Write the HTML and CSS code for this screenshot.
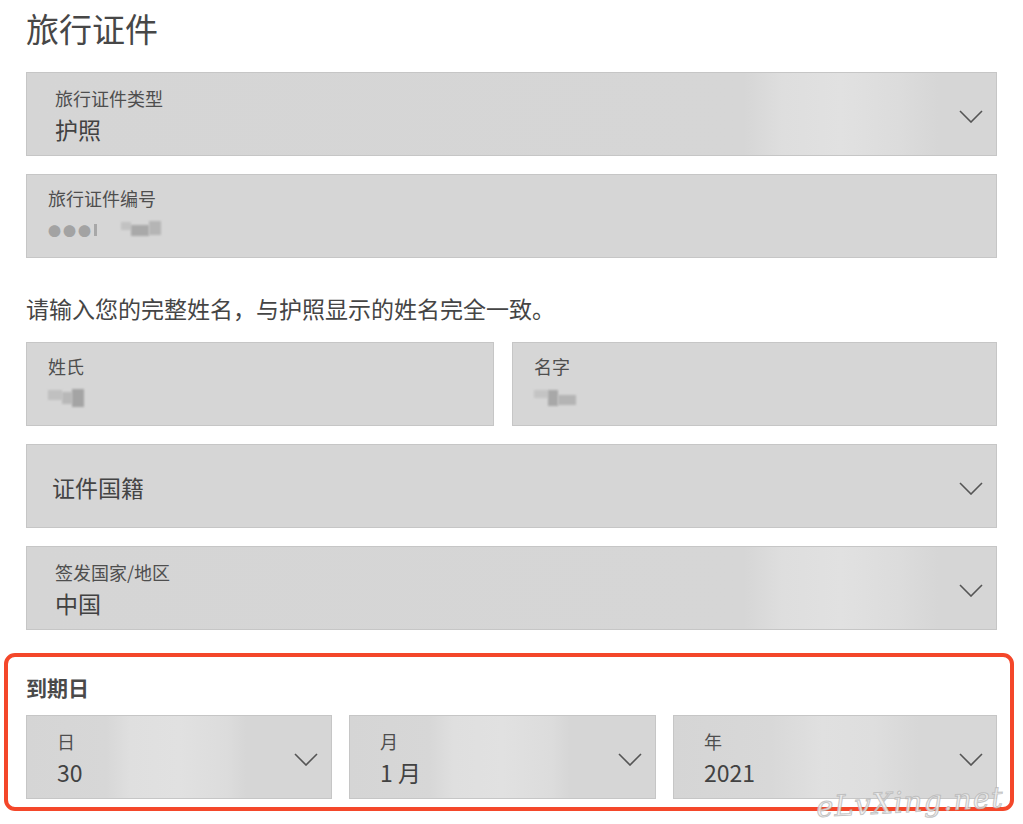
FILE: index.html
```html
<!DOCTYPE html>
<html lang="zh-CN">
<head>
    <meta charset="UTF-8">
    <meta name="viewport" content="width=device-width, initial-scale=1.0">
    <title>旅行证件</title>
    <link rel="stylesheet" href="styles.css">
</head>
<body>
    <div class="page">
        <h1 class="title">旅行证件</h1>

        <div class="field select sheen-wide">
            <span class="label">旅行证件类型</span>
            <span class="value">护照</span>
            <svg class="chevron" viewBox="0 0 24 13"><polyline points="1,1 12,12 23,1"/></svg>
        </div>

        <div class="field input">
            <span class="label">旅行证件编号</span>
            <span class="masked">
                <span class="dots">●●●</span><span class="bar"></span>
                <span class="blur b1"></span><span class="blur b2"></span><span class="blur b3"></span>
            </span>
        </div>

        <p class="hint">请输入您的完整姓名，与护照显示的姓名完全一致。</p>

        <div class="name-row">
            <div class="field input">
                <span class="label">姓氏</span>
                <span class="masked">
                    <span class="blur b4"></span><span class="blur b5"></span><span class="blur b6"></span>
                </span>
            </div>
            <div class="field input">
                <span class="label">名字</span>
                <span class="masked">
                    <span class="blur b7"></span><span class="blur b8"></span><span class="blur b9"></span>
                </span>
            </div>
        </div>

        <div class="field select">
            <span class="placeholder">证件国籍</span>
            <svg class="chevron" viewBox="0 0 24 13"><polyline points="1,1 12,12 23,1"/></svg>
        </div>

        <div class="field select sheen-wide">
            <span class="label">签发国家/地区</span>
            <span class="value">中国</span>
            <svg class="chevron" viewBox="0 0 24 13"><polyline points="1,1 12,12 23,1"/></svg>
        </div>

        <section class="expiry">
            <h2 class="expiry-title">到期日</h2>
            <div class="date-row">
                <div class="field select date sheen-date">
                    <span class="label">日</span>
                    <span class="value">30</span>
                    <svg class="chevron" viewBox="0 0 24 13"><polyline points="1,1 12,12 23,1"/></svg>
                </div>
                <div class="field select date sheen-date">
                    <span class="label">月</span>
                    <span class="value">1 月</span>
                    <svg class="chevron" viewBox="0 0 24 13"><polyline points="1,1 12,12 23,1"/></svg>
                </div>
                <div class="field select date sheen-year">
                    <span class="label">年</span>
                    <span class="value">2021</span>
                    <svg class="chevron" viewBox="0 0 24 13"><polyline points="1,1 12,12 23,1"/></svg>
                </div>
            </div>
            <span class="watermark">eLvXing.net</span>
        </section>
    </div>
</body>
</html>
```

FILE: styles.css
```css
body {
    margin: 0;
    background: #fff;
    font-family: "Noto Sans CJK SC", "Noto Sans", sans-serif;
    color: #444;
}
.page {
    width: 971px;
    padding: 0 26px 20px 26px;
}
.title {
    margin: 7px 0 0;
    font-size: 33px;
    font-weight: 400;
    line-height: 43px;
    color: #474747;
}
.field {
    position: relative;
    box-sizing: border-box;
    height: 84px;
    margin-top: 18px;
    background: #d6d6d6;
    border: 1px solid #c6c6c6;
    display: flex;
    flex-direction: column;
    justify-content: center;
}
.title + .field {
    margin-top: 22px;
}
.select {
    padding: 2px 60px 0 28px;
}
.input {
    padding: 0 20px 4px 21px;
}
.label {
    font-size: 18px;
    line-height: 24px;
    color: #4e4e4e;
}
.value {
    margin-top: 4px;
    font-size: 23px;
    line-height: 30px;
    color: #424242;
}
.placeholder {
    font-size: 23px;
    line-height: 30px;
    color: #444;
    margin-left: -3px;
}
.chevron {
    position: absolute;
    right: 13px;
    top: 37px;
    width: 24px;
    height: 13px;
    fill: none;
    stroke: #555;
    stroke-width: 1.6;
}
.sheen-wide {
    background: linear-gradient(90deg, #d5d5d5 0%, #d6d6d6 74%, #dedede 78%, #e1e1e1 84%, #dcdcdc 90%, #d6d6d6 94%);
}
.sheen-date {
    background: linear-gradient(90deg, #d5d5d5 0%, #d7d7d7 26%, #dfdfdf 34%, #e1e1e1 50%, #dcdcdc 66%, #d6d6d6 72%);
}
.sheen-year {
    background: linear-gradient(90deg, #d5d5d5 0%, #d8d8d8 30%, #e0e0e0 46%, #dedede 62%, #d7d7d7 76%);
}
.masked {
    display: flex;
    align-items: center;
    height: 24px;
    margin-top: 8px;
}
.dots {
    font-size: 13px;
    letter-spacing: 2px;
    color: #a3a3a3;
}
.bar {
    width: 3px;
    height: 12px;
    background: #a8a8a8;
    margin: 0 24px 0 1px;
}
.blur {
    display: inline-block;
    background: #b2b2b2;
    filter: blur(1.2px);
}
.b1 { width: 10px; height: 8px; margin-top: -8px; background: #c2c2c2; }
.b2 { width: 18px; height: 11px; background: #a9a9a9; }
.b3 { width: 12px; height: 14px; margin-top: -4px; background: #b5b5b5; }
.b4 { width: 14px; height: 10px; margin-top: -6px; background: #c0c0c0; }
.b5 { width: 10px; height: 12px; background: #b8b8b8; }
.b6 { width: 12px; height: 18px; background: #a4a4a4; }
.b7 { width: 14px; height: 8px; margin-top: -8px; background: #c4c4c4; }
.b8 { width: 10px; height: 16px; background: #a8a8a8; }
.b9 { width: 18px; height: 10px; margin-top: 4px; background: #b4b4b4; }
.hint {
    margin: 34px 0 0;
    font-size: 23px;
    line-height: 32px;
    color: #454545;
}
.name-row {
    display: grid;
    grid-template-columns: 468px 485px;
    column-gap: 18px;
    margin-top: 18px;
}
.name-row .field {
    margin-top: 0;
}
.expiry {
    position: relative;
    margin: 23px 0 0 -22px;
    width: 1010px;
    padding: 15px 13px 8px 18px;
    box-sizing: border-box;
    border: 4px solid #f4472a;
    border-radius: 11px;
}
.expiry-title {
    margin: 0;
    font-size: 21px;
    font-weight: 700;
    line-height: 30px;
    color: #4a4a4a;
}
.date-row {
    display: grid;
    grid-template-columns: 306px 307px 324px;
    column-gap: 17px;
    margin-top: 13px;
}
.date-row .field {
    margin-top: 0;
}
.date {
    padding-left: 30px;
}
.watermark {
    position: absolute;
    right: 6px;
    bottom: -12px;
    font-family: "DejaVu Serif", serif;
    font-style: italic;
    font-size: 29px;
    letter-spacing: 1px;
    color: rgba(238, 238, 238, 0.85);
    -webkit-text-stroke: 1px rgba(175, 175, 175, 0.7);
    transform: rotate(-3deg);
}
```
